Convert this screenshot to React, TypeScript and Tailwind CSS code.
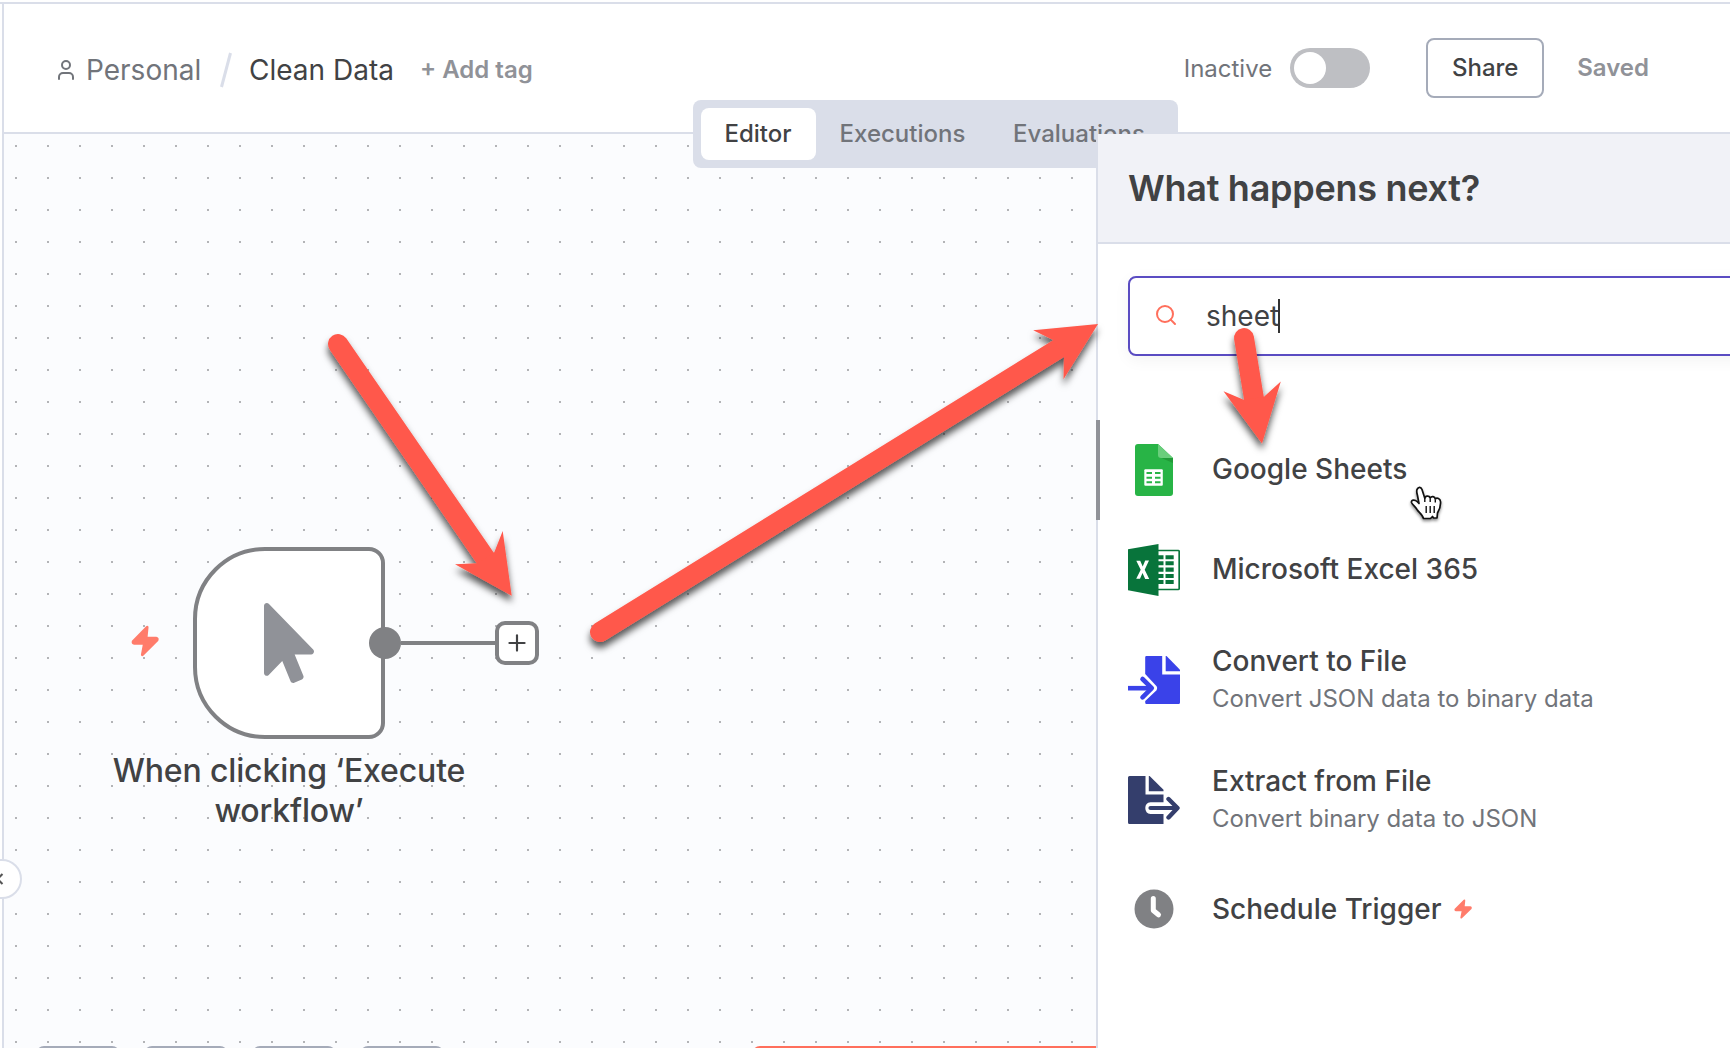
import React from "react";
import { Plus, Search, User } from "lucide-react";

function Bolt({ className }: { className: string }) {
  return (
    <svg viewBox="0 0 26 30" className={className} preserveAspectRatio="none">
      <path
        d="M15 2 L2 15.500 Q1.500 17 3 17.200 L12.500 17.200 L10.500 28 L24.300 14 Q24.800 12.400 23.300 12.200 L14 12.200 Z"
        fill="#ff7c6b"
        stroke="#ff7c6b"
        strokeWidth="2.600"
        strokeLinejoin="round"
      />
    </svg>
  );
}

function SheetsIcon() {
  return (
    <svg viewBox="0 0 38 52" className="h-[52px] w-[38px]">
      <path d="M3 0H23L38 14V49a3 3 0 0 1-3 3H3a3 3 0 0 1-3-3V3a3 3 0 0 1 3-3Z" fill="#28b446" />
      <path d="M24 13 38 19V14Z" fill="#219b38" />
      <path d="M23 0 38 14H26a3 3 0 0 1-3-3Z" fill="#6ace7c" />
      <rect x="9.300" y="25.300" width="18.500" height="16.500" rx="1" fill="#fff" />
      <path d="M11.500 29H17M20 29H25.500M11.500 33.700H17M20 33.700H25.500M11.500 38.300H17M20 38.300H25.500" stroke="#28b446" strokeWidth="2" />
    </svg>
  );
}

function ExcelIcon() {
  return (
    <svg viewBox="0 0 52 52" className="size-[52px]">
      <path d="M30 6.500H50.200a1 1 0 0 1 1 1V44.500a1 1 0 0 1-1 1H30" fill="#fff" stroke="#08743b" strokeWidth="1.700" />
      <path d="M0 5.300 30.500 0V52L0 46.300Z" fill="#08743b" />
      <path
        d="M30 13.300H35.500M37.500 13.300H45.700M30 19.200H35.500M37.500 19.200H45.700M30 25.600H35.500M37.500 25.600H45.700M30 32H35.500M37.500 32H45.700M30 38H35.500M37.500 38H45.700"
        stroke="#08743b"
        strokeWidth="4.100"
      />
      <path d="M8.300 16.800H12.200L14.700 22.600 17.200 16.500H21L16.700 25.700 21.200 35H17.200L14.500 28.900 12 34.700H8.200L12.700 25.700Z" fill="#fff" />
    </svg>
  );
}

function ConvertIcon() {
  return (
    <svg viewBox="0 0 52 48" className="h-[48px] w-[52px]">
      <path
        d="M18.500 0H34.200V18.500H52V46.500Q52 48 50.500 48H18.500Q17.200 48 17.200 46.500V45L28.600 34.200Q30 32.200 28.600 30.200L17.200 18V1.300Q17.200 0 18.500 0Z"
        fill="#3a42e9"
      />
      <path d="M37.700 0H38.500L52 13.700V15.200H37.700Z" fill="#3a42e9" />
      <path d="M0 32.200H24" stroke="#3a42e9" strokeWidth="4.600" />
      <path d="M14.500 23 23.800 32.200 14.500 41.400" stroke="#3a42e9" strokeWidth="4.600" fill="none" strokeLinecap="round" strokeLinejoin="round" />
    </svg>
  );
}

function ExtractIcon() {
  return (
    <svg viewBox="0 0 52 48" className="h-[48px] w-[52px]">
      <path
        d="M1.500 0H17.500V18.500H35.500V26.200H22.500Q17.300 26.700 17.300 32Q17.300 37.500 22.500 38H35.500V48H1.500Q0 48 0 46.500V1.500Q0 0 1.500 0Z"
        fill="#343e6c"
      />
      <path d="M20.800 0H21.600L35.500 13.700V15.200H20.800Z" fill="#343e6c" />
      <path d="M22.500 32H48" stroke="#343e6c" strokeWidth="4.200" strokeLinecap="round" />
      <path d="M40.500 23 49.500 32 40.500 41.500" stroke="#343e6c" strokeWidth="4.400" fill="none" strokeLinecap="round" strokeLinejoin="round" />
    </svg>
  );
}

function ClockIcon() {
  return (
    <svg viewBox="0 0 40 40" className="mb-[2px] size-[40px]">
      <circle cx="20" cy="20" r="19.500" fill="#808184" />
      <path d="M19.300 9.500V21.500L24.500 25.800" stroke="#fff" strokeWidth="5" strokeLinecap="round" strokeLinejoin="round" fill="none" />
    </svg>
  );
}

function ResultRow({
  icon,
  title,
  subtitle,
  trigger,
}: {
  icon: React.ReactNode;
  title: string;
  subtitle?: string;
  trigger?: boolean;
}) {
  return (
    <div className={subtitle ? "flex h-[120px] items-center gap-8" : "flex h-[100px] items-center gap-8"}>
      <div className="flex w-[52px] shrink-0 justify-center">{icon}</div>
      <div className="flex flex-col">
        <div className={subtitle ? "flex h-[42px] items-center pb-1" : "flex h-[42px] items-center pb-[2px]"}>
          <span className="text-[28px] leading-[36px] font-medium whitespace-nowrap text-[#414244]">{title}</span>
          {trigger && <Bolt className="ml-[12px] h-5 w-[18px]" />}
        </div>
        {subtitle && (
          <span className="-mt-[2px] mb-[2px] text-[24px] leading-[34px] whitespace-nowrap text-[#71747a]">{subtitle}</span>
        )}
      </div>
    </div>
  );
}

function Arrow({ tail, head }: { tail: [number, number, number, number]; head: string }) {
  const [x1, y1, x2, y2] = tail;
  return (
    <g filter="url(#arrow-shadow)">
      <line x1={x1} y1={y1} x2={x2} y2={y2} stroke="#ff594b" strokeWidth="20" strokeLinecap="round" />
      <polygon points={head} fill="#ff594b" />
    </g>
  );
}

function Annotations() {
  return (
    <svg viewBox="0 0 1730 1048" className="pointer-events-none absolute inset-0 z-40 h-[1048px] w-[1730px]">
      <defs>
        <filter id="arrow-shadow" x="0" y="0" width="1730" height="1048" filterUnits="userSpaceOnUse">
          <feDropShadow dx="0" dy="6" stdDeviation="3.500" floodColor="#000" floodOpacity="0.650" />
        </filter>
      </defs>
      <Arrow tail={[338, 344, 488, 562]} head="455,564.300 477.500,563.300 494.300,552.300 502.700,531 511.700,595.700" />
      <Arrow tail={[600, 632, 1062, 346.500]} head="1033.200,330.300 1053.200,340 1064,357.300 1063.500,379.300 1098,324" />
      <Arrow tail={[1244, 338, 1255.500, 408]} head="1223.500,391.300 1244.300,400 1264,396.700 1280.800,381.500 1262,443.500" />
    </svg>
  );
}

function HandCursor() {
  return (
    <svg viewBox="0 0 32 34" className="absolute top-[486px] left-[1410px] z-50 h-[34px] w-[32px] drop-shadow-[0_2px_1.5px_rgba(0,0,0,0.45)]">
      <path
        d="M7 3.500C8.500 0.500 11 1 12 3.500L14.800 12.300C15 9.800 19 9 20.200 12C21.500 9.700 24.800 10.300 25.300 13C27 11.200 30.300 12.500 30.500 15.500C31 20 29.800 23 27.500 27L27 32H23.500L22.500 30.500L20.500 32.500H13.500C12.800 29 9 26.500 7 23.500C5 20 2.500 19 1.500 16.500C1 13.500 5 13.500 7 15.500L9 17.500L7.500 9.500C6.800 7 6.300 5.500 7 3.500Z"
        fill="#fff"
        stroke="#111"
        strokeWidth="1.700"
        strokeLinejoin="round"
      />
      <path d="M16.200 20V27M20.200 20V27M24.200 20V27M14.800 12V16M20.200 12.500V16M25.300 13.500V16.500" stroke="#111" strokeWidth="1.400" />
    </svg>
  );
}

function TriggerNode() {
  return (
    <>
      <Bolt className="absolute top-[491px] left-[127px] h-[32px] w-[28px]" />
      <div className="absolute top-[413px] left-[189px] flex size-[192px] items-center justify-center rounded-l-[72px] rounded-r-[16px] border-4 border-[#808184] bg-white">
        <svg viewBox="0 0 320 512" className="h-[80px] w-[50px]">
          <path
            fill="#909298"
            d="M302.189 329.126H196.105l55.831 135.993c3.889 9.428-.555 19.999-9.444 23.999l-49.165 21.427c-9.165 4-19.443-.571-23.332-9.714l-53.053-129.136-86.664 89.138C18.729 472.710 0 463.554 0 447.977V18.299C0 1.899 19.921-6.096 30.277 5.443l284.412 292.542c11.472 11.179 3.007 31.141-12.500 31.141z"
          />
        </svg>
      </div>
      <div className="absolute top-[487px] left-[365px] flex items-center">
        <div className="h-8 w-8 rounded-full bg-[#808184]" />
        <div className="h-1 w-[94px] bg-[#808184]" />
        <div className="flex size-[44px] items-center justify-center rounded-[10px] border-4 border-[#808184] bg-white">
          <Plus size={26} strokeWidth={2} color="#414244" />
        </div>
      </div>
      <div className="absolute top-[617px] left-[85px] w-[400px] text-center text-[32px] leading-[40px] font-medium tracking-[-0.15px] text-[#414244]">
        When clicking ‘Execute
        <br />
        workflow’
      </div>
    </>
  );
}

function Tabs() {
  return (
    <div className="absolute top-[96px] left-[689px] flex h-[68px] w-[485px] items-center rounded-lg bg-[#dadee9] p-2 text-[24px] font-medium text-[#71747a]">
      <div className="flex h-[52px] w-[115px] items-center justify-center rounded-lg bg-white pr-px text-[#414244]">Editor</div>
      <div className="flex w-[173px] justify-center">Executions</div>
      <div className="flex w-[180px] justify-center">Evaluations</div>
    </div>
  );
}

function Header() {
  return (
    <header className="relative z-10 flex h-[130px] shrink-0 items-center border-b-2 border-[#dadee9] bg-white">
      <div className="flex items-center pt-1 pl-[50px]">
        <User size={24} strokeWidth={2} color="#71747a" />
        <span className="ml-[8px] w-[116px] text-[28px] leading-[42px] text-[#71747a]">Personal</span>
        <svg viewBox="0 0 14 38" className="ml-[17px] h-[38px] w-[14px]">
          <path d="M2.500 36 11.500 2" stroke="#dadee9" strokeWidth="3" />
        </svg>
        <span className="ml-[16px] w-[148px] text-[28px] leading-[42px] whitespace-nowrap text-[#414244]">Clean Data</span>
        <span className="ml-[23px] text-[24px] font-semibold whitespace-nowrap text-[#909298]">+ Add tag</span>
      </div>
      <div className="ml-auto flex items-center pr-[81px] text-[24px]">
        <span className="pt-[2px] text-[#71747a]">Inactive</span>
        <div className="ml-[18px] flex h-10 w-20 items-center rounded-full bg-[#bebfc3] p-1">
          <div className="size-8 rounded-full bg-white" />
        </div>
        <button className="ml-14 flex h-[60px] w-[118px] items-center justify-center rounded-lg border-2 border-[#a5abb9] bg-white font-medium text-[#414244]">
          Share
        </button>
        <span className="ml-[33px] font-semibold text-[#909298]">Saved</span>
      </div>
      <Tabs />
    </header>
  );
}

function Canvas() {
  return (
    <section className="relative flex-1 overflow-hidden bg-[#fbfcfe]">
      <svg className="absolute inset-0 h-full w-full">
        <defs>
          <pattern id="dots" x="11" y="11" width="32" height="32" patternUnits="userSpaceOnUse">
            <rect width="2" height="2" fill="#b3b4b7" />
          </pattern>
        </defs>
        <rect width="100%" height="100%" fill="url(#dots)" />
      </svg>
      <TriggerNode />
      <div className="absolute top-[912px] left-8 flex gap-6">
        <div className="h-[84px] w-[84px] rounded-lg border-2 border-[#a5abb9] bg-white" />
        <div className="h-[84px] w-[84px] rounded-lg border-2 border-[#a5abb9] bg-white" />
        <div className="h-[84px] w-[84px] rounded-lg border-2 border-[#a5abb9] bg-white" />
        <div className="h-[84px] w-[84px] rounded-lg border-2 border-[#a5abb9] bg-white" />
      </div>
      <div className="absolute top-[912px] left-[748px] h-[84px] w-[400px] rounded-lg bg-[#ff6f5c]" />
    </section>
  );
}

function NodePanel() {
  return (
    <section className="relative z-20 flex w-[634px] shrink-0 flex-col border-l-2 border-[#dadee9] bg-white">
      <div className="absolute top-[286px] -left-[2px] h-[100px] w-1 bg-[#909298]" />
      <div className="flex h-[110px] shrink-0 items-center border-b-2 border-[#dadee9] bg-[#f1f2f7] pl-[30px]">
        <h1 className="text-[36px] font-semibold tracking-[-0.27px] whitespace-nowrap text-[#414244]">What happens next?</h1>
      </div>
      <div className="overflow-hidden pt-8 pb-8 pl-[30px]">
        <div className="flex h-20 w-[640px] items-center rounded-lg border-2 border-[#5a4cc2] bg-white pl-6 shadow-[0_4px_16px_rgba(0,0,0,0.05)]">
          <Search size={24} strokeWidth={2} color="#ff6f5c" className="-mt-[2px]" />
          <span className="ml-7 text-[28px] text-[#414244]">sheet</span>
          <div className="-ml-px h-[34px] w-[2px] bg-[#333]" />
        </div>
      </div>
      <div className="flex flex-col pt-8 pl-[30px]">
        <ResultRow icon={<SheetsIcon />} title="Google Sheets" />
        <ResultRow icon={<ExcelIcon />} title="Microsoft Excel 365" />
        <ResultRow icon={<ConvertIcon />} title="Convert to File" subtitle="Convert JSON data to binary data" />
        <ResultRow icon={<ExtractIcon />} title="Extract from File" subtitle="Convert binary data to JSON" />
        <ResultRow icon={<ClockIcon />} title="Schedule Trigger" trigger />
      </div>
    </section>
  );
}

export default function App() {
  return (
    <div className="relative flex h-[1048px] w-[1730px] flex-col overflow-hidden bg-white pt-[2px] font-['Inter',sans-serif]">
      <div className="flex flex-1 border-t-2 border-[#dadee9]">
        <aside className="w-1 shrink-0 border-r-2 border-[#dadee9] bg-white" />
        <main className="flex min-w-0 flex-1 flex-col">
          <Header />
          <div className="flex min-h-0 flex-1">
            <Canvas />
            <NodePanel />
          </div>
        </main>
      </div>
      <div className="absolute top-[859px] -left-[18px] z-30 flex size-10 items-center justify-center rounded-full border-2 border-[#dadee9] bg-white">
        <svg viewBox="0 0 20 20" className="size-5 -translate-x-[2px]">
          <path d="M12.500 5 7.500 10 12.500 15" stroke="#555" strokeWidth="2" fill="none" />
        </svg>
      </div>
      <Annotations />
      <HandCursor />
    </div>
  );
}
